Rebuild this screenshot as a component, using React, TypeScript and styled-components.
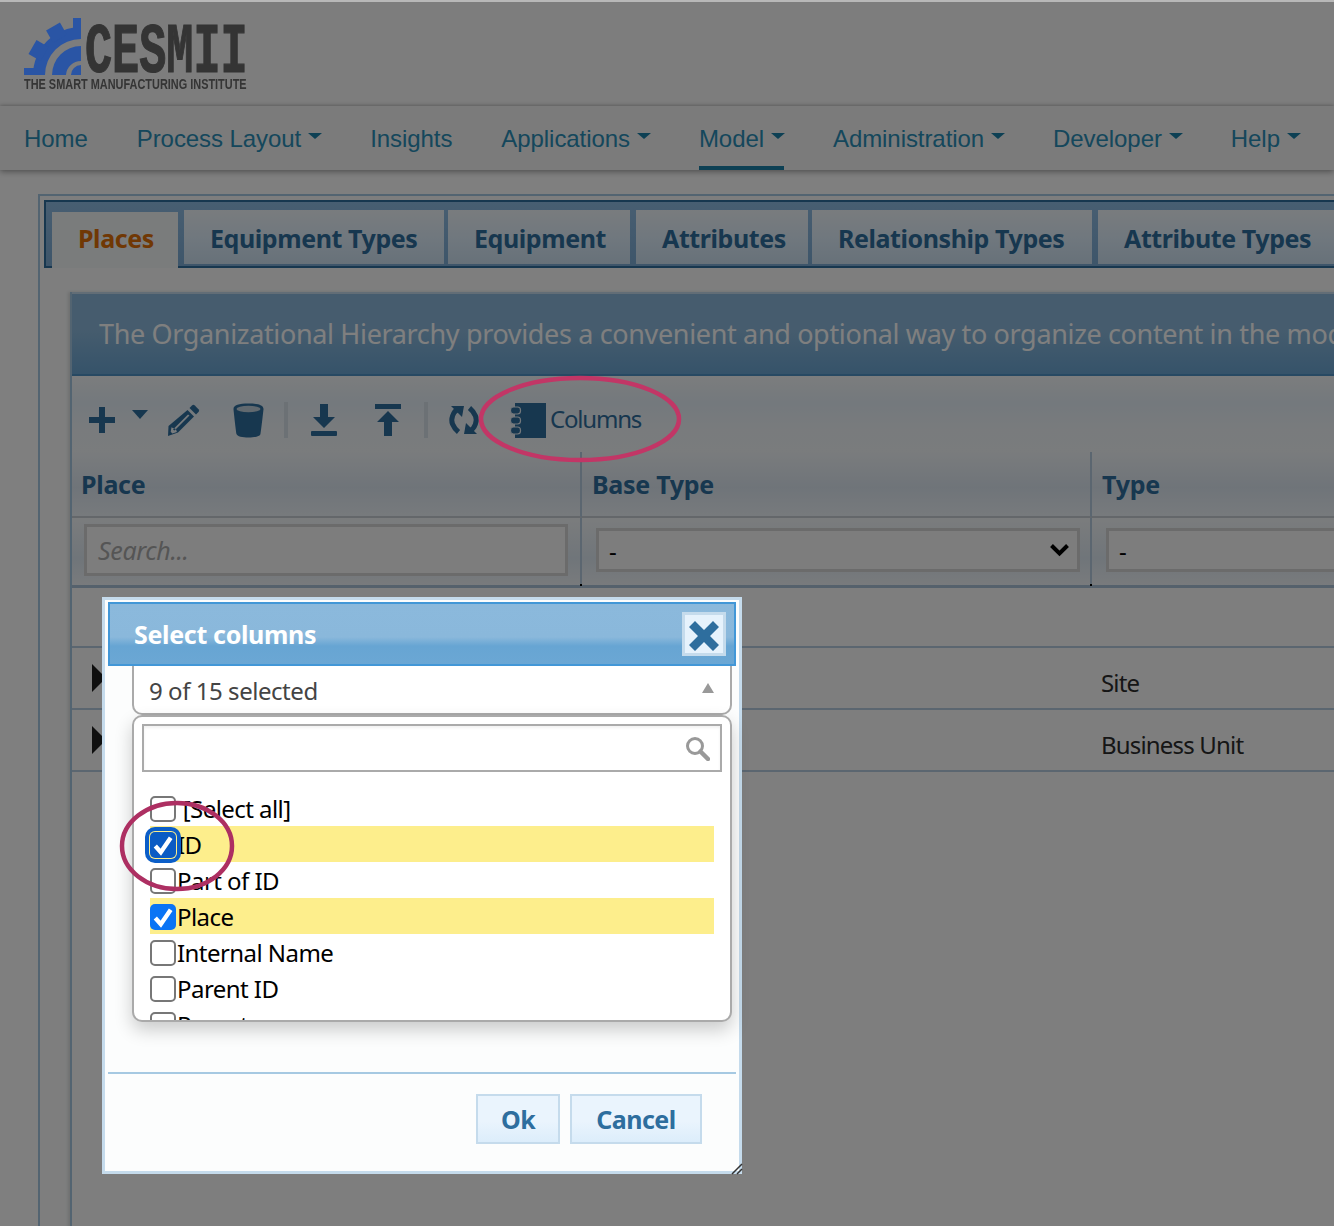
import React from "react";
import styled, { createGlobalStyle } from "styled-components";

const GlobalStyle = createGlobalStyle`
  html, body { margin: 0; padding: 0; background: #fff; }
  * { box-sizing: border-box; }
`;

const UI = `"Noto Sans", "DejaVu Sans", sans-serif`;
const BLUE = "#2e6e9e";

const Page = styled.div`
  position: relative;
  width: 1334px;
  height: 1226px;
  overflow: hidden;
  background: #fff;
  border-top: 2px solid #b8b8b8;
  font-family: ${UI};
`;

const Header = styled.header`
  height: 104px;
  background: #fafafa;
  padding: 16px 0 0 24px;
`;

const LogoWrap = styled.div`
  display: flex;
  flex-direction: column;
  width: 222px;
`;

const LogoTop = styled.div`
  display: flex;
  align-items: flex-end;
  height: 57px;
`;

const GearSvg = styled.svg`
  position: relative;
  z-index: 1;
  flex: none;
  filter: blur(0.4px);
`;

const LogoWord = styled.span`
  flex: none;
  width: 160px;
  font-family: "Liberation Mono", monospace;
  font-weight: 700;
  font-size: 70px;
  line-height: 46px;
  height: 46px;
  color: #686868;
  -webkit-text-stroke: 1.2px #686868;
  filter: blur(0.4px);
  transform: translateY(2px) scaleX(0.645);
  transform-origin: left bottom;
  margin-left: 4px;
  white-space: nowrap;
`;

const LogoTag = styled.span`
  font-family: "Liberation Sans", sans-serif;
  font-weight: 700;
  font-size: 15px;
  line-height: 14px;
  color: #6a6a6a;
  margin-top: 2px;
  white-space: nowrap;
  filter: blur(0.4px);
  transform: scaleX(0.728);
  transform-origin: left center;
`;

const Nav = styled.nav`
  position: relative;
  height: 64px;
  background: #f6f6f6;
  display: flex;
  gap: 49px;
  padding-left: 24px;
  box-shadow: 0 2px 6px rgba(0, 0, 0, 0.35), 0 -1px 3px rgba(0, 0, 0, 0.15);
`;

const NavItem = styled.a<{ $active?: boolean }>`
  display: flex;
  align-items: center;
  height: 64px;
  font-family: "Liberation Sans", sans-serif;
  font-size: 24px;
  letter-spacing: -0.07px;
  color: #2a8fb8;
  padding-top: 6px;
  border-bottom: 4px solid ${(p) => (p.$active ? "#1a80a8" : "transparent")};
  white-space: nowrap;
`;

const NavCaret = styled.i`
  display: block;
  width: 0;
  height: 0;
  margin: 0 -1px 6px 7px;
  border-left: 7px solid transparent;
  border-right: 7px solid transparent;
  border-top: 6px solid #1a80a8;
`;

const Main = styled.main`
  padding: 24px 0 0 38px;
`;

const Outer = styled.section`
  width: 1320px;
  height: 1040px;
  border: 2px solid #a6c9e2;
  border-right: 0;
  padding: 4px 0 0 4px;
  background: #fcfdfd;
`;

const TabBar = styled.div`
  display: flex;
  align-items: flex-start;
  height: 68px;
  border: 2px solid ${BLUE};
  border-right: 0;
  padding: 8px 0 0 6px;
  background: linear-gradient(#90bde4, #7cabd4);
`;

const Tab = styled.div<{ $active?: boolean; $w: number; $gap: number }>`
  flex: none;
  width: ${(p) => p.$w}px;
  height: ${(p) => (p.$active ? 56 : 54)}px;
  margin-top: ${(p) => (p.$active ? 2 : 0)}px;
  margin-right: ${(p) => p.$gap}px;
  padding-left: 26px;
  line-height: ${(p) => (p.$active ? 52 : 56)}px;
  font-size: 25px;
  font-weight: 700;
  letter-spacing: -0.42px;
  white-space: nowrap;
  color: ${(p) => (p.$active ? "#e17009" : BLUE)};
  background: ${(p) =>
    p.$active ? "#f5f8f9" : "linear-gradient(#f2f8fd 0%, #dfeffc 55%, #cfe3f3 100%)"};
`;

const Panel = styled.div`
  width: 1300px;
  height: 960px;
  margin: 24px 0 0 26px;
  border-left: 2px solid #a6c9e2;
  box-shadow: -2px 0 3px rgba(0, 0, 0, 0.12);
`;

const Banner = styled.div`
  height: 84px;
  padding: 22px 0 0 27px;
  font-size: 27px;
  line-height: 36px;
  letter-spacing: -0.35px;
  white-space: nowrap;
  color: #fff;
  background: linear-gradient(#8cb9dc 0%, #8cb9dc 45%, #6ba6d4 100%);
  border-bottom: 2px solid #4f93c7;
  border-top: 2px solid #c5dbec;
  overflow: hidden;
`;

const Toolbar = styled.div`
  display: flex;
  align-items: center;
  height: 76px;
  padding-top: 12px;
  background: linear-gradient(#f7fafc 0%, #e8f2fa 35%, #f2f7fb 70%, #f4f8fb 100%);
`;

const ToolButton = styled.span<{ $w: number }>`
  flex: none;
  width: ${(p) => p.$w}px;
  display: flex;
  justify-content: center;
  align-items: center;
  color: ${BLUE};
`;

const Separator = styled.i<{ $w: number }>`
  flex: none;
  width: ${(p) => p.$w}px;
  height: 36px;
  display: flex;
  justify-content: center;
  &::before {
    content: "";
    width: 4px;
    background: #d9e3ea;
  }
`;

const ColumnsButton = styled.span`
  flex: none;
  display: flex;
  align-items: center;
  gap: 4px;
  padding-left: 10px;
  color: ${BLUE};
`;

const ColumnsLabel = styled.span`
  font-size: 24px;
  letter-spacing: -1.2px;
  margin-top: -3px;
`;

const TableGrid = styled.div`
  display: grid;
  grid-template-columns: 510px 510px 1fr;
`;

const HeadCell = styled.div<{ $pad: number; $last?: boolean }>`
  height: 66px;
  padding: 15px 0 0 ${(p) => p.$pad}px;
  font-size: 25px;
  line-height: 34px;
  letter-spacing: -0.28px;
  font-weight: 700;
  color: ${BLUE};
  border-bottom: 2px solid #c9cfd4;
  border-right: ${(p) => (p.$last ? "0" : "2px solid #b7cde0")};
  background: linear-gradient(#f4f8fb 0%, #dfe9f3 55%, #eff5fa 100%);
`;

const FilterCell = styled.div<{ $last?: boolean }>`
  position: relative;
  height: 70px;
  padding: 6px 12px 0 12px;
  border-right: ${(p) => (p.$last ? "0" : "2px solid #b7cde0")};
  border-bottom: 3px solid #aac3d8;
  background: linear-gradient(#f6f9fb 0%, #e0ebf4 60%, #f2f6fa 100%);
  &::after {
    content: "";
    display: ${(p) => (p.$last ? "none" : "block")};
    position: absolute;
    right: -2px;
    bottom: -1px;
    width: 2px;
    height: 2px;
    background: #000;
  }
`;

const SearchInput = styled.div`
  height: 52px;
  border: 3px solid #d6d6d6;
  background: #fafafa;
  padding-left: 11px;
  font-size: 25px;
  font-style: italic;
  line-height: 47px;
  letter-spacing: -0.35px;
  color: #aaa;
`;

const FilterSelect = styled.div`
  height: 44px;
  margin: 4px -2px 0 2px;
  border: 3px solid #d6d6d6;
  background: #fafafa;
  padding: 0 8px 0 10px;
  display: flex;
  align-items: center;
  justify-content: space-between;
  color: #000;
  font-size: 24px;
`;

const EmptyRow = styled.div`
  height: 60px;
  border-bottom: 2px solid #b7cde0;
`;

const DataRow = styled.div`
  height: 62px;
  display: grid;
  grid-template-columns: 1009px 1fr;
  padding-left: 20px;
  align-items: center;
  border-bottom: 2px solid #b7cde0;
  font-size: 24px;
  letter-spacing: -0.82px;
  color: #2c2c2c;
`;

const RowText = styled.span`
  margin-top: 8px;
`;

const Expander = styled.i`
  display: block;
  width: 0;
  height: 0;
  margin-top: -1px;
  border-top: 14px solid transparent;
  border-bottom: 14px solid transparent;
  border-left: 14px solid #1f1f1f;
`;

const Overlay = styled.div`
  position: absolute;
  inset: -2px 0 0 0;
  background: rgba(0, 0, 0, 0.5);
`;

const Modal = styled.div`
  position: absolute;
  left: 102px;
  top: 595px;
  width: 640px;
  height: 577px;
  background: #fcfdfd;
  border: 3px solid #c5dbec;
  padding: 2px 3px 0;
  display: flex;
  flex-direction: column;
`;

const TitleBar = styled.div`
  flex: none;
  display: flex;
  align-items: center;
  justify-content: space-between;
  height: 64px;
  padding: 0 8px 0 24px;
  border: 2px solid #4297d7;
  background: linear-gradient(#8bb9dc 0%, #8ab8db 55%, #67a5d3 70%, #6ba7d4 100%);
  color: #fff;
  font-size: 25px;
  font-weight: 700;
  letter-spacing: -0.32px;
`;

const CloseButton = styled.span`
  width: 44px;
  height: 44px;
  display: flex;
  align-items: center;
  justify-content: center;
  padding-top: 3px;
  background: #e6f2fc;
  border: 3px solid #c5dbec;
`;

const Body = styled.div`
  position: relative;
  flex: none;
  height: 406px;
  padding: 0 4px 0 24px;
`;

const SelectHeader = styled.div`
  height: 49px;
  border: 2px solid #aaa;
  border-top: 0;
  border-radius: 0 0 10px 10px;
  background: #fff;
  display: flex;
  align-items: center;
  justify-content: space-between;
  padding: 1px 16px 0 15px;
  font-size: 24px;
  letter-spacing: -0.45px;
  color: #444;
`;

const UpArrow = styled.i`
  display: block;
  width: 0;
  height: 0;
  margin-bottom: 4px;
  border-left: 6px solid transparent;
  border-right: 6px solid transparent;
  border-bottom: 10px solid #999;
`;

const Popup = styled.div`
  height: 307px;
  border: 2px solid #aaa;
  border-radius: 10px;
  background: #fff;
  box-shadow: 0 8px 18px rgba(0, 0, 0, 0.2);
  padding: 7px 8px 0 8px;
  overflow: hidden;
`;

const PopupSearch = styled.div`
  height: 48px;
  border: 2px solid #aaa;
  box-shadow: inset 0 2px 3px rgba(0, 0, 0, 0.06);
  display: flex;
  align-items: center;
  justify-content: flex-end;
  padding-right: 10px;
  margin-bottom: 18px;
`;

const Option = styled.div<{ $on?: boolean }>`
  display: flex;
  align-items: center;
  height: 36px;
  margin: 0 8px 0 8px;
  background: ${(p) => (p.$on ? "#fdee8c" : "transparent")};
  font-size: 24px;
  letter-spacing: -0.55px;
  color: #000;
  white-space: pre;
`;

const CheckBox = styled.span<{ $on?: boolean; $focus?: boolean }>`
  position: relative;
  flex: none;
  width: 26px;
  height: 26px;
  margin-top: 2px;
  margin-right: 1px;
  border-radius: 5px;
  border: 2px solid ${(p) => (p.$on ? "transparent" : "#777")};
  background: ${(p) => (p.$on ? (p.$focus ? "#0a5bc4" : "#0a74f5") : "#fff")};
  display: flex;
  align-items: center;
  justify-content: center;
  box-shadow: ${(p) => (p.$focus ? "0 0 0 1px #fdee8c, 0 0 0 5px #0b5ec8" : "none")};
`;

const Footer = styled.div`
  flex: none;
  border-top: 2px solid #a6c9e2;
  display: flex;
  justify-content: flex-end;
  gap: 10px;
  padding: 20px 34px 0 0;
  position: relative;
`;

const DialogButton = styled.span<{ $w: number }>`
  width: ${(p) => p.$w}px;
  height: 50px;
  border: 2px solid #c5dbec;
  background: linear-gradient(#eaf4fd 0%, #eaf4fd 55%, #dcedfb 100%);
  display: flex;
  align-items: center;
  justify-content: center;
  color: ${BLUE};
  font-size: 25px;
  font-weight: 700;
  letter-spacing: -0.55px;
`;

const Grip = styled.svg`
  position: absolute;
  right: -4px;
  bottom: -4px;
`;

const Annotation = styled.svg`
  position: absolute;
  left: 0;
  top: -2px;
  pointer-events: none;
`;

const nav = [
  { t: "Home" },
  { t: "Process Layout", c: true },
  { t: "Insights" },
  { t: "Applications", c: true },
  { t: "Model", c: true, a: true },
  { t: "Administration", c: true },
  { t: "Developer", c: true },
  { t: "Help", c: true },
];

const tabs = [
  { t: "Places", w: 126, g: 6, a: true },
  { t: "Equipment Types", w: 260, g: 4 },
  { t: "Equipment", w: 182, g: 6 },
  { t: "Attributes", w: 172, g: 4 },
  { t: "Relationship Types", w: 280, g: 6 },
  { t: "Attribute Types", w: 260, g: 0 },
];

const options = [
  { t: " [Select all]" },
  { t: "ID", on: true, focus: true },
  { t: "Part of ID" },
  { t: "Place", on: true },
  { t: "Internal Name" },
  { t: "Parent ID" },
  { t: "Parent" },
];

const Gear = () => (
  <GearSvg width="57" height="57" viewBox="0 0 57 57" fill="#2a55a5">
    <path d="M57 9A48 48 0 0 0 9 57H21A36 36 0 0 1 57 21Z" />
    <path d="M57 28A29 29 0 0 0 28 57H42A15 15 0 0 1 57 43Z" />
    <path d="M57 47A10 10 0 0 0 47 57H57Z" />
    <rect x="49" y="0" width="8" height="14" />
    <g transform="rotate(-30 57 57)"><rect x="49" y="1" width="16" height="14" /></g>
    <g transform="rotate(-60 57 57)"><rect x="49" y="1" width="16" height="14" /></g>
    <rect x="0" y="50" width="12" height="7" />
  </GearSvg>
);

const Plus = () => (
  <svg width="28" height="28" viewBox="0 0 28 28" fill="currentColor">
    <path d="M11 1h6v10h10v6H17v10h-6V17H1v-6h10z" />
  </svg>
);

const Caret = () => (
  <svg width="16" height="9" viewBox="0 0 16 9" fill="currentColor" style={{ marginTop: -12 }}>
    <path d="M0 0h16L8 9z" />
  </svg>
);

const Pencil = () => (
  <svg width="32" height="32" viewBox="0 0 32 32" fill="currentColor">
    <path d="M24 1.500a2 2 0 0 1 2.800 0l3.700 3.700a2 2 0 0 1 0 2.800L28 10.500 21.500 4z" />
    <path
      fillRule="evenodd"
      d="M19.500 6l6.500 6.500L10 28.500 0 32l.5-10zM20 10.500L5 25.500l1.500 1 15-15zM3.500 23.200l-.8 4.600 1.600 1.600 4.600-1.500-1-2.900-3-1z"
    />
  </svg>
);

const Bucket = () => (
  <svg width="31" height="35" viewBox="0 0 31 35">
    <path
      fill="currentColor"
      d="M.5 6C.5 2 6 .5 15.500.5S30.500 2 30.500 6c0 1-2.500 23-3 25-.5 2.500-6 3.500-12 3.500s-11.500-1-12-3.500C3 29 .5 7 .5 6z"
    />
    <ellipse cx="15.500" cy="6" rx="12" ry="3.200" fill="#c3d3df" />
  </svg>
);

const Download = () => (
  <svg width="26" height="32" viewBox="0 0 26 32" fill="currentColor">
    <path d="M9 0h8v13h7L13 24 2 13h7z" />
    <rect x="0" y="27" width="26" height="5" rx="1" />
  </svg>
);

const Upload = () => (
  <svg width="26" height="32" viewBox="0 0 26 32" fill="currentColor">
    <rect x="0" y="0" width="26" height="5" />
    <path d="M13 7l11 11h-7v14H9V18H2z" />
  </svg>
);

const Refresh = () => (
  <svg width="32" height="32" viewBox="0 0 32 32" fill="none" stroke="currentColor">
    <path strokeWidth="5" d="M10 5C5 8 2.500 15 4.500 20c1 2.500 3 5.500 6 8" />
    <path fill="currentColor" stroke="none" d="M3 2h13l-2 11z" />
    <path strokeWidth="5" d="M22 27c5-3 7.500-10 5.500-15-1-2.500-3-5.500-6-8" />
    <path fill="currentColor" stroke="none" d="M29 30H16l2-11z" />
  </svg>
);

const Notebook = () => (
  <svg width="36" height="35" viewBox="0 0 36 35" fill="currentColor">
    <rect x="5" y="0" width="31" height="35" />
    <g stroke="#e4eef6" strokeWidth="1.200">
      <rect x="0.500" y="4" width="10" height="7" rx="3" />
      <rect x="0.500" y="14" width="10" height="7" rx="3" />
      <rect x="0.500" y="24" width="10" height="7" rx="3" />
    </g>
  </svg>
);

const Chevron = () => (
  <svg width="19" height="14" viewBox="0 0 19 14" fill="none" stroke="#000" strokeWidth="4">
    <path d="M1.500 2.500L9.500 10.500 17.500 2.500" />
  </svg>
);

const CloseIcon = () => (
  <svg width="32" height="32" viewBox="0 0 32 32" fill={BLUE}>
    <path d="M7 1l9 9 9-9 6 6-9 9 9 9-6 6-9-9-9 9-6-6 9-9-9-9z" />
  </svg>
);

const Magnifier = () => (
  <svg width="25" height="25" viewBox="0 0 25 25" fill="none" stroke="#999">
    <circle cx="10" cy="10" r="7.500" strokeWidth="3" />
    <path d="M15.500 15.500L23 23" strokeWidth="4.500" strokeLinecap="round" />
  </svg>
);

const Check = ({ w }: { w: number }) => (
  <svg width={w} height={w} viewBox="0 0 20 20" fill="none" stroke="#fff" strokeWidth="4">
    <path d="M3 11l5 5.500L17 3.500" />
  </svg>
);

export default function App() {
  return (
    <Page>
      <GlobalStyle />
      <Header>
        <LogoWrap>
          <LogoTop>
            <Gear />
            <LogoWord>CESMII</LogoWord>
          </LogoTop>
          <LogoTag>THE SMART MANUFACTURING INSTITUTE</LogoTag>
        </LogoWrap>
      </Header>
      <Nav>
        {nav.map((n) => (
          <NavItem key={n.t} $active={n.a}>
            {n.t}
            {n.c && <NavCaret />}
          </NavItem>
        ))}
      </Nav>
      <Main>
        <Outer>
          <TabBar>
            {tabs.map((t) => (
              <Tab key={t.t} $active={t.a} $w={t.w} $gap={t.g}>
                {t.t}
              </Tab>
            ))}
          </TabBar>
          <Panel>
            <Banner>
              The Organizational Hierarchy provides a convenient and optional way to organize content in the model
            </Banner>
            <Toolbar>
              <ToolButton $w={60}><Plus /></ToolButton>
              <ToolButton $w={16}><Caret /></ToolButton>
              <ToolButton $w={72}><Pencil /></ToolButton>
              <ToolButton $w={56}><Bucket /></ToolButton>
              <Separator $w={20} />
              <ToolButton $w={56}><Download /></ToolButton>
              <ToolButton $w={72}><Upload /></ToolButton>
              <Separator $w={4} />
              <ToolButton $w={72}><Refresh /></ToolButton>
              <ColumnsButton>
                <Notebook />
                <ColumnsLabel>Columns</ColumnsLabel>
              </ColumnsButton>
            </Toolbar>
            <TableGrid>
              <HeadCell $pad={9}>Place</HeadCell>
              <HeadCell $pad={10}>Base Type</HeadCell>
              <HeadCell $pad={10} $last>Type</HeadCell>
              <FilterCell><SearchInput>Search...</SearchInput></FilterCell>
              <FilterCell>
                <FilterSelect>- <Chevron /></FilterSelect>
              </FilterCell>
              <FilterCell $last><FilterSelect>-</FilterSelect></FilterCell>
            </TableGrid>
            <EmptyRow />
            <DataRow><Expander /><RowText>Site</RowText></DataRow>
            <DataRow><Expander /><RowText>Business Unit</RowText></DataRow>
          </Panel>
        </Outer>
      </Main>

      <Overlay />

      <Modal>
        <TitleBar>
          Select columns
          <CloseButton><CloseIcon /></CloseButton>
        </TitleBar>
        <Body>
          <SelectHeader>
            9 of 15 selected
            <UpArrow />
          </SelectHeader>
          <Popup>
            <PopupSearch><Magnifier /></PopupSearch>
            {options.map((o) => (
              <Option key={o.t} $on={o.on}>
                <CheckBox $on={o.on} $focus={o.focus}>
                  {o.on && <Check w={22} />}
                </CheckBox>
                {o.t}
              </Option>
            ))}
          </Popup>
        </Body>
        <Footer>
          <DialogButton $w={84}>Ok</DialogButton>
          <DialogButton $w={132}>Cancel</DialogButton>
        </Footer>
        <Grip width="12" height="12" viewBox="0 0 12 12" stroke="#333" strokeWidth="1.500">
          <path d="M1 11L11 1M6 11l5-5" />
        </Grip>
      </Modal>

      <Annotation width="1334" height="1226" viewBox="0 0 1334 1226" fill="none">
        <ellipse cx="580" cy="419" rx="99" ry="41" stroke="#c23666" strokeWidth="4.500" />
        <ellipse cx="177" cy="846" rx="55" ry="43" stroke="#ad2f62" strokeWidth="4.500" />
      </Annotation>
    </Page>
  );
}
